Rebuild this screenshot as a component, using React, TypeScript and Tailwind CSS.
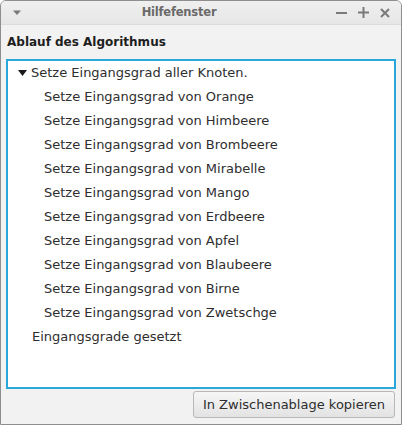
import React from "react";

const fruits = [
  "Orange",
  "Himbeere",
  "Brombeere",
  "Mirabelle",
  "Mango",
  "Erdbeere",
  "Apfel",
  "Blaubeere",
  "Birne",
  "Zwetschge",
];

export default function App() {
  return (
    <div
      className="w-[402px] h-[425px] flex flex-col bg-[#f2f2f2] border border-[#8e8e8e] rounded-t-[6px] overflow-hidden text-[13px] text-[#2e2e2e]"
      style={{ fontFamily: '"DejaVu Sans", sans-serif' }}
    >
      {/* Titelleiste */}
      <div className="h-[24px] shrink-0 flex items-center px-[10px] bg-gradient-to-b from-[#f0f0f0] to-[#e6e6e6] border-b border-[#dcdcdc]">
        <svg width="10" height="6" viewBox="0 0 10 6" className="ml-[1px]">
          <path d="M1 0.5 L9 0.5 L5 5 Z" fill="#7a7a7a" />
        </svg>
        <div className="flex-1 text-center font-bold text-[11.5px] text-[#6a6a6a] tracking-[-0.2px]">Hilfefenster</div>
        <div className="flex items-center gap-[11px] mr-[1px]">
          <svg width="11" height="10" viewBox="0 0 11 10">
            <path d="M0 5 H11" stroke="#7a7a7a" strokeWidth="2" />
          </svg>
          <svg width="11" height="11" viewBox="0 0 11 11">
            <path d="M0 5.5 H11 M5.5 0 V11" stroke="#7a7a7a" strokeWidth="2" />
          </svg>
          <svg width="10" height="10" viewBox="0 0 10 10">
            <path d="M1 1 L9 9 M9 1 L1 9" stroke="#7a7a7a" strokeWidth="2" />
          </svg>
        </div>
      </div>

      {/* Inhalt */}
      <div className="flex-1 flex flex-col px-[5px] pt-[9px] pb-[6px]">
        <div className="font-bold text-[12px] text-[#1e1e1e] leading-[16px] pl-[1px]">Ablauf des Algorithmus</div>
        <div className="mt-[9px] flex-1 bg-white border-2 border-[#2aa8dc]">
          <div className="h-[24px] flex items-center pl-[10px]">
            <svg width="9" height="6" viewBox="0 0 9 6" className="mr-[4px]">
              <path d="M0 0 L9 0 L4.5 6 Z" fill="#1a1a1a" />
            </svg>
            <span>Setze Eingangsgrad aller Knoten.</span>
          </div>
          {fruits.map((f) => (
            <div key={f} className="h-[24px] flex items-center pl-[36px]">
              Setze Eingangsgrad von {f}
            </div>
          ))}
          <div className="h-[24px] flex items-center pl-[24px]">Eingangsgrade gesetzt</div>
        </div>
        <div className="flex justify-end mt-[2px]">
          <button className="h-[27px] px-[9px] mr-[1px] rounded-[3px] border border-[#b8b8b8] bg-gradient-to-b from-[#f6f6f6] to-[#e3e3e3] text-[13px] text-[#2e2e2e]">
            In Zwischenablage kopieren
          </button>
        </div>
      </div>
    </div>
  );
}
